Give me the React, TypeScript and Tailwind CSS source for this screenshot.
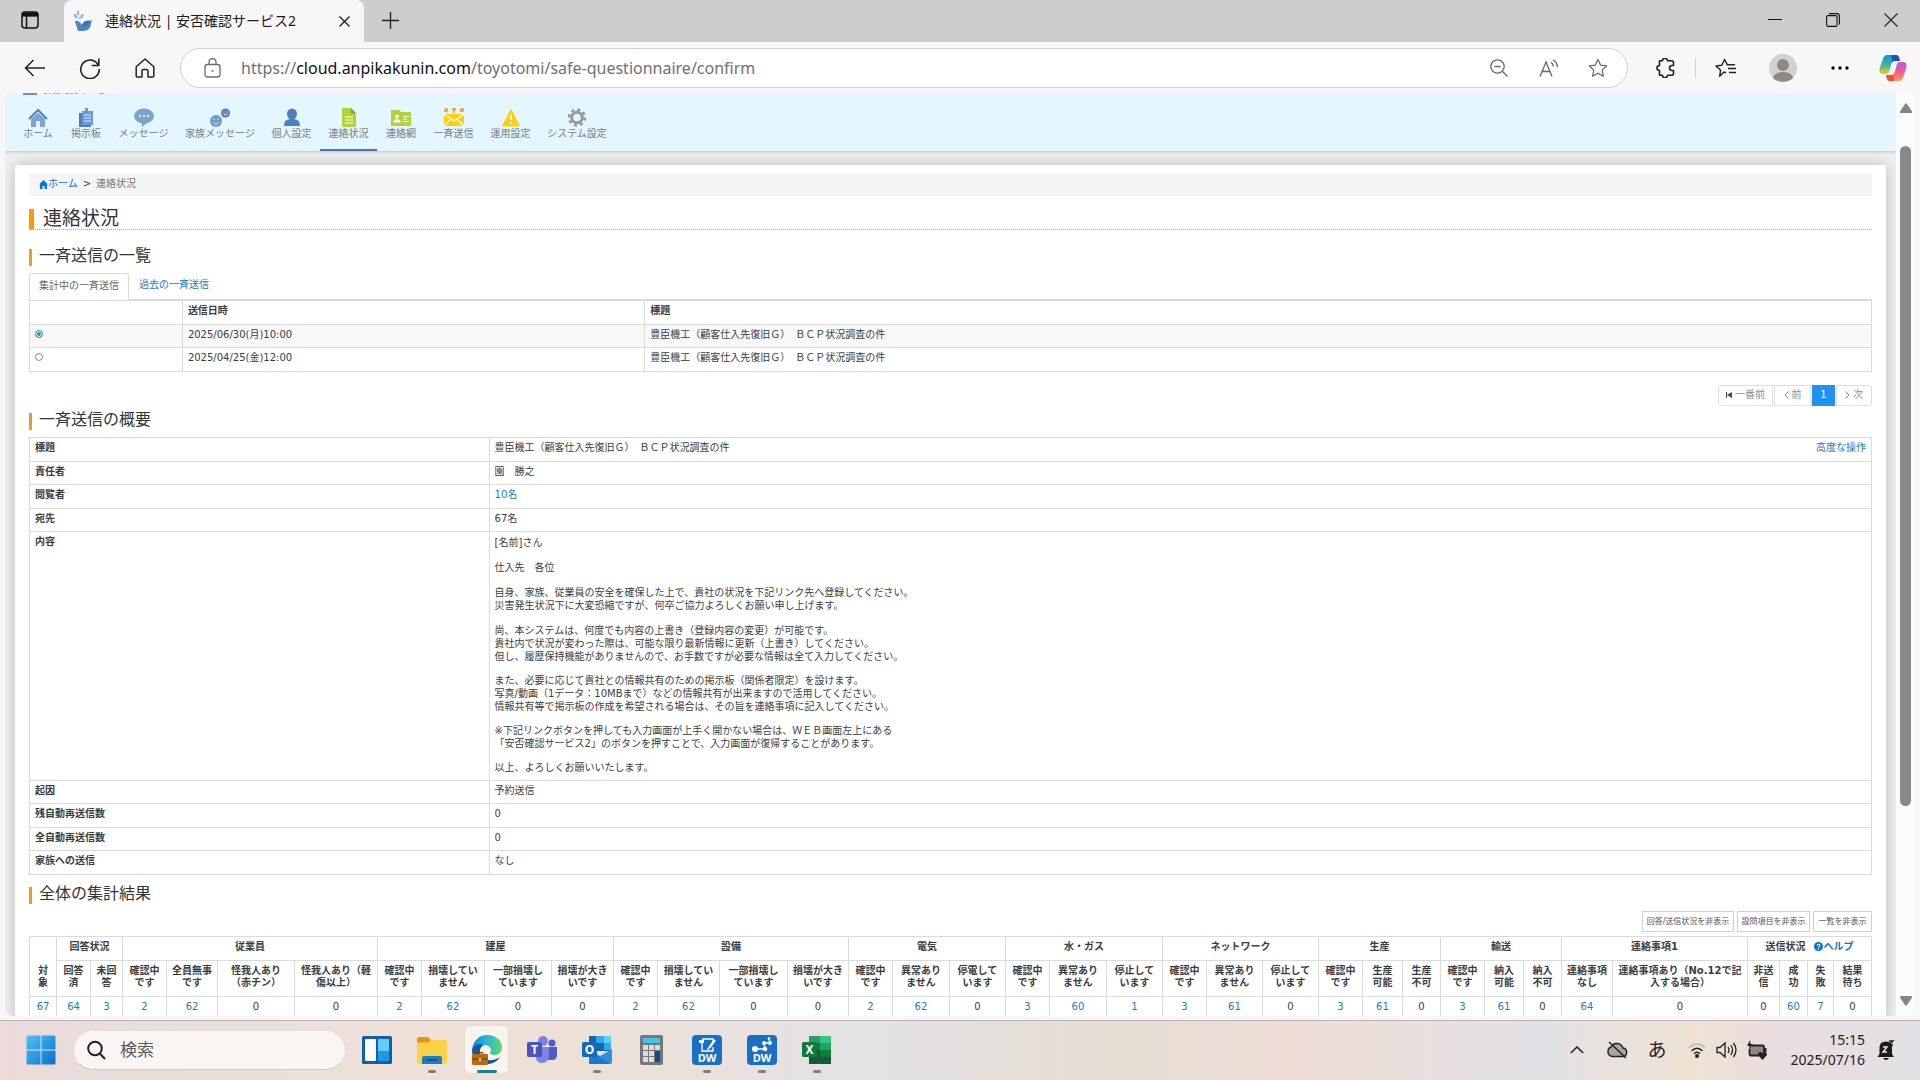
import type { ReactNode } from 'react';

const PAGE_FONT = "font-['DejaVu_Sans','Noto_Sans_CJK_JP',sans-serif]";
const UI_FONT = "font-['Noto_Sans','Noto_Sans_CJK_JP',sans-serif]";

/* ---------- Browser chrome ---------- */

function Slot({ label, className, children }: { label: string; className: string; children: ReactNode }) {
  return (
    <button type="button" aria-label={label} className={`flex h-10 shrink-0 items-center justify-center ${className}`}>
      {children}
    </button>
  );
}

function Bird() {
  return (
    <svg width="20" height="22" viewBox="0 0 20 22" aria-hidden="true">
      <path d="M2 11c3-1 5 1 7 4 1-4 4-5 7-4l3-1-1 3c0 5-3 8-8 8H6c-2-1-2-2-2-4-1-2-2-4-2-6z" fill="#4f84c4" />
      <path d="M17 11c-4-1-7 2-8 5 3 1 6-1 8-5z" fill="#3b6fb5" />
      <path d="M5 9C1 8 0 6 1 4c3 0 4 2 4 5zM5 6C3 4 3 2 5 0c2 2 2 4 0 6zM6 9c0-3 2-5 5-5 0 3-2 5-5 5z" fill="#9ebfe3" />
    </svg>
  );
}

function TabStrip() {
  return (
    <div className="flex h-[42px] shrink-0 bg-[#cdcdcd]">
      <Slot label="タブ操作メニュー" className="w-[60px]">
        <svg width="18" height="18" viewBox="0 0 18 18" fill="none" stroke="#111" strokeWidth="1.5">
          <rect x="1" y="1" width="16" height="16" rx="3" />
          <path d="M1 4.5h16M5.5 5v12" />
          <path d="M1.5 3.5h15" strokeWidth="4" />
        </svg>
      </Slot>
      <div className="ml-1 flex w-[300px] items-center rounded-t-lg bg-[#f7f7f7] pr-[10px] pl-[9px]">
        <Bird />
        <span className="ml-3 grow truncate text-sm leading-5 text-[#1b1b1b]">連絡状況 | 安否確認サービス2</span>
        <button type="button" aria-label="タブを閉じる" className="flex w-5 justify-center">
          <svg width="11" height="11" viewBox="0 0 11 11" stroke="#222" strokeWidth="1.4"><path d="M.5.5l10 10M10.5.5l-10 10" /></svg>
        </button>
      </div>
      <Slot label="新しいタブ" className="w-[53px]">
        <svg width="17" height="17" viewBox="0 0 17 17" stroke="#222" strokeWidth="1.4"><path d="M8.5 0v17M0 8.5h17" /></svg>
      </Slot>
      <div className="grow" />
      <Slot label="最小化" className="w-[58px]">
        <svg width="14" height="14" viewBox="0 0 14 14" stroke="#111" strokeWidth="1"><path d="M0 6.5h14" /></svg>
      </Slot>
      <Slot label="元に戻す" className="w-[58px]">
        <svg width="14" height="14" viewBox="0 0 14 14" fill="none" stroke="#111" strokeWidth="1.1">
          <rect x=".6" y="2.6" width="10.5" height="10.8" rx="1.5" />
          <path d="M3 .6h8a2.4 2.4 0 0 1 2.4 2.4v8.500" />
        </svg>
      </Slot>
      <Slot label="閉じる" className="w-[58px]">
        <svg width="14" height="14" viewBox="0 0 14 14" stroke="#222" strokeWidth="1.1"><path d="M.5.5l13 13M13.500.5l-13 13" /></svg>
      </Slot>
    </div>
  );
}

const STAR = 'M10 1.500l2.600 5.600 6.100.8-4.500 4.200 1.200 6.100L10 15.200l-5.400 3 1.200-6.100L1.300 7.900l6.100-.8z';

function Toolbar() {
  return (
    <div className="flex h-[51px] shrink-0 items-center bg-[#f7f7f7] pl-[7px] pr-[2px]">
      <Slot label="戻る" className="w-[55px]">
        <svg width="21" height="18" viewBox="0 0 21 18" fill="none" stroke="#222" strokeWidth="1.500"><path d="M9.500 1L1.500 9l8 8M1.500 9H21" /></svg>
      </Slot>
      <Slot label="更新" className="w-[55px]">
        <svg width="22" height="22" viewBox="0 0 22 22" fill="none" stroke="#222" strokeWidth="1.600">
          <path d="M19.500 8.500A9.300 9.300 0 1 0 20.300 12" />
          <path d="M19.800 1.500v7h-7" />
        </svg>
      </Slot>
      <Slot label="ホーム" className="w-[55px]">
        <svg width="20" height="20" viewBox="0 0 20 20" fill="none" stroke="#222" strokeWidth="1.500" strokeLinejoin="round">
          <path d="M10 1l8.800 7.800V18a1 1 0 0 1-1 1H13v-6a1.500 1.500 0 0 0-1.500-1.500h-3A1.500 1.500 0 0 0 7 13v6H2.200a1 1 0 0 1-1-1V8.800z" />
        </svg>
      </Slot>
      <div className="ml-2 flex h-10 grow items-center rounded-full border border-[#d0d0d0] bg-white">
        <svg className="ml-[23px] shrink-0" width="17" height="20" viewBox="0 0 17 20" fill="none" stroke="#6b6b6b" strokeWidth="1.300">
          <rect x="1" y="6.500" width="15" height="12.500" rx="2.500" />
          <path d="M5 6.500V4a3.500 3.500 0 0 1 7 0v2.500" />
          <circle cx="8.500" cy="13" r="1" fill="#6b6b6b" stroke="none" />
        </svg>
        <a href="#url" className="ml-5 grow text-base leading-6 text-[#6f6f6f]">
          https://<span className="text-[#111]">cloud.anpikakunin.com</span>/toyotomi/safe-questionnaire/confirm
        </a>
        <Slot label="縮小" className="w-[52px]">
          <svg width="18" height="18" viewBox="0 0 18 18" fill="none" stroke="#666" strokeWidth="1.300"><circle cx="7.500" cy="7.500" r="6.700" /><path d="M12.500 12.500l5 5M4.500 7.500h6" /></svg>
        </Slot>
        <Slot label="音声で読み上げる" className="w-[48px]">
          <svg width="20" height="18" viewBox="0 0 20 18" fill="none" stroke="#666" strokeWidth="1.300"><path d="M1 17.500L7 3l6 14.500M3.200 12.500h7.600M12 3.200c1.500 1 2.200 2.300 2.300 4.300M14 .8c3 1.700 4.300 4 4.400 7.400" /></svg>
        </Slot>
        <Slot label="お気に入りに追加" className="mr-1 w-[50px]">
          <svg width="20" height="20" viewBox="0 0 20 20" fill="none" stroke="#666" strokeWidth="1.200" strokeLinejoin="round"><path d={STAR} /></svg>
        </Slot>
      </div>
      <Slot label="拡張機能" className="ml-[7px] w-[60px]">
        <svg width="19" height="20" viewBox="0 0 19 20" fill="none" stroke="#222" strokeWidth="1.600" strokeLinejoin="round">
          <path d="M3.500 2.800h3a2.500 2.500 0 0 1 5 0h4a2 2 0 0 1 2 2v2.700h-1.500a2.500 2.500 0 0 0 0 5h1.500v2.700a2 2 0 0 1-2 2h-4a2.500 2.500 0 0 1-5 0h-3v-4.700a2.500 2.500 0 0 1 0-5z" />
        </svg>
      </Slot>
      <div className="h-5 w-px bg-[#cfcfcf]" />
      <Slot label="お気に入り" className="w-[58px]">
        <svg width="21" height="20" viewBox="0 0 21 20" fill="none" stroke="#222" strokeWidth="1.400" strokeLinejoin="round"><path d="M11 14.800L9 14l-4.300 4.200.9-6L1 8l5.800-.8L9.500 1.500l2.800 5.200H20M13 10.500h8M14 14.500h7" /></svg>
      </Slot>
      <Slot label="プロファイル" className="w-[58px]">
        <svg width="28" height="28" viewBox="0 0 28 28"><circle cx="14" cy="14" r="14" fill="#d3d1ce" /><circle cx="14" cy="11" r="6" fill="#8d8a86" /><path d="M4 24c1-4 5-6 10-6s9 2 10 6c-5 5-15 5-20 0z" fill="#8d8a86" /></svg>
      </Slot>
      <Slot label="設定など" className="w-[56px]">
        <svg width="18" height="4" viewBox="0 0 18 4"><circle cx="2" cy="2" r="1.700" /><circle cx="9" cy="2" r="1.700" /><circle cx="16" cy="2" r="1.700" /></svg>
      </Slot>
      <Slot label="Copilot" className="w-[50px]">
        <svg width="28" height="26" viewBox="0 0 28 26">
          <defs>
            <linearGradient id="cpA" x1="0" y1="0" x2="0" y2="1"><stop offset="0" stopColor="#1a8fe6" /><stop offset=".5" stopColor="#35b6a0" /><stop offset="1" stopColor="#f3c81f" /></linearGradient>
            <linearGradient id="cpB" x1="0" y1="0" x2="0" y2="1"><stop offset="0" stopColor="#b65ae8" /><stop offset=".6" stopColor="#f4608a" /><stop offset="1" stopColor="#ffa04d" /></linearGradient>
          </defs>
          <path d="M8 0h9c3 0 3 3 4 6h-5c-2 0-3 1-4 4l-2 7c-1 2-2 2-4 2H4c-4 0-4-3-3-7l3-8C5 1 6 0 8 0z" fill="url(#cpA)" />
          <path d="M12 0h5c3 0 3 3 4 6h-5c-1 0-2 0-2.500 1z" fill="#1a50c8" />
          <path d="M20 26h-9c-3 0-3-3-4-6h5c2 0 3-1 4-4l2-7c1-2 2-2 4-2h2c4 0 4 3 3 7l-3 8c-1 3-2 4-4 4z" fill="url(#cpB)" />
          <path d="M15 26h-4c-3 0-3-3-4-6h5c1 0 2 0 2.500-1z" fill="#f0502f" />
        </svg>
      </Slot>
    </div>
  );
}

/* ---------- Site navigation ---------- */

const navItems: { label: string; width: string; icon: ReactNode; active?: boolean }[] = [
  {
    label: 'ホーム', width: 'w-[48px]',
    icon: <><path d="M10 4.500l7 6.500v8h-5v-6H8v6H3v-8z" fill="#7ba3d6" /><path d="M1 11l9-9 9 9" fill="none" stroke="#4c80c0" strokeWidth="2" /></>,
  },
  {
    label: '掲示板', width: 'w-[48px]',
    icon: <><path d="M3 5h3v12h9v2H3z" fill="#4c80c0" /><path d="M6 3h3V0h3v3h5v14H6z" fill="#6c99d1" /><path d="M8 7h7M8 10h7M8 13h7" stroke="#dcebfa" /></>,
  },
  {
    label: 'メッセージ', width: 'w-[67px]',
    icon: <><ellipse cx="10" cy="8" rx="10" ry="7.500" fill="#7ba3d6" /><path d="M8 14h6l-6 5z" fill="#7ba3d6" /><path d="M5 8h2M9 8h2M13 8h2" stroke="#e6f2fc" strokeWidth="2" /></>,
  },
  {
    label: '家族メッセージ', width: 'w-[86px]',
    icon: <><circle cx="6" cy="13" r="6" fill="#6c99d1" /><circle cx="15.500" cy="5" r="4.500" fill="#4c80c0" /><path d="M3 14q3 4 6 0M13.500 6q2 2 4 0" fill="none" stroke="#e6f2fc" /><path d="M4 10.500v1.500M8 10.500v1.500M14 3.500v1M17 3.500v1" stroke="#e6f2fc" /></>,
  },
  {
    label: '個人設定', width: 'w-[57px]',
    icon: <><ellipse cx="10" cy="6" rx="5" ry="5.500" fill="#4c80c0" /><path d="M2 18c0-5 2-6 6-7h4c4 1 6 2 6 7z" fill="#4c80c0" /></>,
  },
  {
    label: '連絡状況', width: 'w-[57px]', active: true,
    icon: <><path d="M3 0h9l5 5.500V19H3z" fill="#b2d235" /><path d="M12 0l5 5.500h-5z" fill="#4fae72" /><path d="M6 9h8M6 12h8M6 15h8" stroke="#fff" /></>,
  },
  {
    label: '連絡網', width: 'w-[48px]',
    icon: <><path d="M0 2h8l2 2h10v14H0z" fill="#b2d235" /><circle cx="6" cy="8.500" r="2" fill="#fff" /><path d="M2.500 14c0-3 7-3 7 0zM12 8.500h6M12 11h4M12 13.500h6" fill="#fff" stroke="#fff" /></>,
  },
  {
    label: '一斉送信', width: 'w-[57px]',
    icon: <><path d="M0 6h20v12H0z" fill="#ffcf0d" /><path d="M0 6l10 7 10-7M0 18l7-7M20 18l-7-7" fill="none" stroke="#fff" strokeWidth="1.200" /><path d="M1 1h3M1 1v3M1 1l3 3M16 4l3-3M16 1h3v3M10 0v5M8 2l2-2 2 2" stroke="#f29b1d" strokeWidth="1.500" fill="none" /></>,
  },
  {
    label: '運用設定', width: 'w-[57px]',
    icon: <><path d="M10 1.500L18.500 18h-17z" fill="#ffcf0d" stroke="#ffcf0d" strokeLinejoin="round" /><path d="M10 7v5M10 14v2" stroke="#fff" strokeWidth="2" /></>,
  },
  {
    label: 'システム設定', width: 'w-[76px]',
    icon: <><circle cx="10" cy="9.500" r="5.300" fill="none" stroke="#999" strokeWidth="3" /><circle cx="10" cy="9.500" r="7.900" fill="none" stroke="#999" strokeWidth="2.600" strokeDasharray="3.100 3.100" /></>,
  },
];

function SiteNav() {
  return (
    <header className="relative z-10 flex h-[58px] shrink-0 flex-col rounded-tl-lg bg-[#e4f6ff] shadow-[0_1px_3px_rgba(0,0,0,0.2)]">
      <div className="flex h-[2px] items-end gap-[6px] overflow-hidden pl-[18px]">
        <span className="h-[2px] w-[14px] shrink-0 bg-[#6c8fc8]" />
        <span className="text-[9px] leading-[9px] text-[#6c8fc8]">安否確認サービス2</span>
      </div>
      <nav className="flex grow pl-[9px]">
        {navItems.map((item) => (
          <a
            key={item.label}
            href="#nav"
            className={`flex h-14 shrink-0 flex-col items-center border-b-2 pt-[13px] ${item.width} ${item.active ? 'border-[#4a76b8]' : 'border-transparent'}`}
          >
            <svg width="20" height="20" viewBox="0 0 20 20" className="shrink-0">{item.icon}</svg>
            <span className="text-[10px] leading-3 whitespace-nowrap text-[#777f85]">{item.label}</span>
          </a>
        ))}
      </nav>
    </header>
  );
}

/* ---------- Page sections ---------- */

const CELL = 'border border-[#d9dadb] px-[5px] pt-1 pb-1 text-left align-top leading-3';
const LINK = 'text-[#2079cc]';

function SectionTitle({ children, className }: { children: ReactNode; className: string }) {
  return <h2 className={`h-[17px] border-l-[3px] border-[#e5a01f] pl-[7px] text-base leading-[13px] text-[#333] ${className}`}>{children}</h2>;
}

const broadcasts = [
  { date: '2025/06/30(月)10:00', title: '豊臣機工（顧客仕入先復旧Ｇ）　ＢＣＰ状況調査の件' },
  { date: '2025/04/25(金)12:00', title: '豊臣機工（顧客仕入先復旧Ｇ）　ＢＣＰ状況調査の件' },
];

function BroadcastList() {
  return (
    <section>
      <SectionTitle className="mt-[19px]">一斉送信の一覧</SectionTitle>
      <div className="mt-[7px] flex h-[27px] border-b border-[#d9dadb]">
        <button type="button" className="h-[27px] rounded-t-[3px] border border-b-white border-[#d9dadb] bg-white px-[9px] pb-[2px] leading-3 text-[#666]">集計中の一斉送信</button>
        <button type="button" className={`px-[10px] pb-[2px] leading-3 ${LINK}`}>過去の一斉送信</button>
      </div>
      <table className="w-full table-fixed border-collapse">
        <colgroup><col className="w-[8.3%]" /><col className="w-[25.1%]" /><col /></colgroup>
        <thead>
          <tr className="h-6">
            <th className={CELL} aria-label="選択" />
            <th className={CELL}>送信日時</th>
            <th className={CELL}>標題</th>
          </tr>
        </thead>
        <tbody>
          {broadcasts.map((row, i) => (
            <tr key={row.date} className="h-6 odd:h-[23px] odd:bg-[#f8f8f8]">
              <td className={CELL}>
                <input
                  type="radio"
                  name="broadcast"
                  aria-label={row.date}
                  defaultChecked={i === 0}
                  className="mt-px block size-2 appearance-none rounded-full border border-[#8b8b8b] bg-white checked:border-[#3f9d96] checked:bg-[#2f8f88] checked:shadow-[inset_0_0_0_1px_white]"
                />
              </td>
              <td className={CELL}>{row.date}</td>
              <td className={CELL}>{row.title}</td>
            </tr>
          ))}
        </tbody>
      </table>
      <nav className="mt-[13px] flex h-[21px] justify-end gap-px text-[#8a8f94]" aria-label="ページ送り">
        <button type="button" className="flex w-[55px] items-center justify-center gap-[3px] rounded-l-[3px] border border-[#dedfe0] pb-[2px]">
          <svg width="6" height="6" viewBox="0 0 6 6" fill="#444"><path d="M0 0h1v6H0zM6 0v6L1 3z" /></svg>一番前
        </button>
        <button type="button" className="flex w-[37px] items-center justify-center gap-[3px] border border-[#dedfe0] pb-[2px]">
          <svg width="5" height="8" viewBox="0 0 5 8" fill="none" stroke="#888"><path d="M4.500.5L1 4l3.500 3.500" /></svg>前
        </button>
        <button type="button" className="w-[23px] bg-[#2090f3] pb-[2px] text-white">1</button>
        <button type="button" className="flex w-[36px] items-center justify-center gap-[3px] rounded-r-[3px] border border-[#dedfe0] pb-[2px]">
          <svg width="5" height="8" viewBox="0 0 5 8" fill="none" stroke="#888"><path d="M.5.5L4 4 .5 7.500" /></svg>次
        </button>
      </nav>
    </section>
  );
}

const message: { lines: string[]; gap: string }[] = [
  { lines: ['[名前]さん'], gap: 'mb-3' },
  { lines: ['仕入先　各位'], gap: 'mb-3' },
  {
    lines: [
      '自身、家族、従業員の安全を確保した上で、貴社の状況を下記リンク先へ登録してください。',
      '災害発生状況下に大変恐縮ですが、何卒ご協力よろしくお願い申し上げます。',
    ],
    gap: 'mb-3',
  },
  {
    lines: [
      '尚、本システムは、何度でも内容の上書き（登録内容の変更）が可能です。',
      '貴社内で状況が変わった際は、可能な限り最新情報に更新（上書き）してください。',
      '但し、履歴保持機能がありませんので、お手数ですが必要な情報は全て入力してください。',
    ],
    gap: 'mb-[11px]',
  },
  {
    lines: [
      'また、必要に応じて貴社との情報共有のための掲示板（関係者限定）を設けます。',
      '写真/動画（1データ：10MBまで）などの情報共有が出来ますので活用してください。',
      '情報共有等で掲示板の作成を希望される場合は、その旨を連絡事項に記入してください。',
    ],
    gap: 'mb-[11px]',
  },
  {
    lines: [
      '※下記リンクボタンを押しても入力画面が上手く開かない場合は、ＷＥＢ画面左上にある',
      '「安否確認サービス2」のボタンを押すことで、入力画面が復帰することがあります。',
    ],
    gap: 'mb-[11px]',
  },
  { lines: ['以上、よろしくお願いいたします。'], gap: 'mb-0' },
];

const summary: { label: string; height: string; value: ReactNode }[] = [
  {
    label: '標題', height: 'h-6',
    value: (
      <div className="flex justify-between">
        <span>豊臣機工（顧客仕入先復旧Ｇ）　ＢＣＰ状況調査の件</span>
        <a href="#advanced" className={LINK}>高度な操作</a>
      </div>
    ),
  },
  { label: '責任者', height: 'h-[23px]', value: '園　勝之' },
  { label: '閲覧者', height: 'h-6', value: <a href="#viewers" className={LINK}>10名</a> },
  { label: '宛先', height: 'h-[23px]', value: '67名' },
  {
    label: '内容', height: 'h-[249px]',
    value: message.map((para) => (
      <p key={para.lines[0]} className={`leading-[13px] ${para.gap}`}>
        {para.lines.map((line) => <span key={line} className="block">{line}</span>)}
      </p>
    )),
  },
  { label: '起因', height: 'h-[23px]', value: '予約送信' },
  { label: '残自動再送信数', height: 'h-6', value: '0' },
  { label: '全自動再送信数', height: 'h-[23px]', value: '0' },
  { label: '家族への送信', height: 'h-6', value: 'なし' },
];

function Summary() {
  return (
    <section>
      <SectionTitle className="mt-[7px]">一斉送信の概要</SectionTitle>
      <table className="mt-[7px] w-full table-fixed border-collapse">
        <colgroup><col className="w-[24.95%]" /><col /></colgroup>
        <tbody>
          {summary.map((row) => (
            <tr key={row.label} className={row.height}>
              <th scope="row" className={CELL}>{row.label}</th>
              <td className={CELL}>{row.value}</td>
            </tr>
          ))}
        </tbody>
      </table>
    </section>
  );
}

const groups: { name: string; cols: { label: string; value: number; width: number }[] }[] = [
  { name: '回答状況', cols: [{ label: '回答|済', value: 64, width: 34 }, { label: '未回|答', value: 3, width: 32 }] },
  {
    name: '従業員',
    cols: [
      { label: '確認中|です', value: 2, width: 44 },
      { label: '全員無事|です', value: 62, width: 51 },
      { label: '怪我人あり|（赤チン）', value: 0, width: 77 },
      { label: '怪我人あり（軽|傷以上）', value: 0, width: 83 },
    ],
  },
  {
    name: '建屋',
    cols: [
      { label: '確認中|です', value: 2, width: 44 },
      { label: '損壊してい|ません', value: 62, width: 63 },
      { label: '一部損壊し|ています', value: 0, width: 67 },
      { label: '損壊が大き|いです', value: 0, width: 62 },
    ],
  },
  {
    name: '設備',
    cols: [
      { label: '確認中|です', value: 2, width: 44 },
      { label: '損壊してい|ません', value: 62, width: 62 },
      { label: '一部損壊し|ています', value: 0, width: 68 },
      { label: '損壊が大き|いです', value: 0, width: 61 },
    ],
  },
  {
    name: '電気',
    cols: [
      { label: '確認中|です', value: 2, width: 44 },
      { label: '異常あり|ません', value: 62, width: 57 },
      { label: '停電して|います', value: 0, width: 56 },
    ],
  },
  {
    name: '水・ガス',
    cols: [
      { label: '確認中|です', value: 3, width: 44 },
      { label: '異常あり|ません', value: 60, width: 57 },
      { label: '停止して|います', value: 1, width: 56 },
    ],
  },
  {
    name: 'ネットワーク',
    cols: [
      { label: '確認中|です', value: 3, width: 44 },
      { label: '異常あり|ません', value: 61, width: 56 },
      { label: '停止して|います', value: 0, width: 56 },
    ],
  },
  {
    name: '生産',
    cols: [
      { label: '確認中|です', value: 3, width: 44 },
      { label: '生産|可能', value: 61, width: 40 },
      { label: '生産|不可', value: 0, width: 38 },
    ],
  },
  {
    name: '輸送',
    cols: [
      { label: '確認中|です', value: 3, width: 44 },
      { label: '納入|可能', value: 61, width: 39 },
      { label: '納入|不可', value: 0, width: 38 },
    ],
  },
  {
    name: '連絡事項1',
    cols: [
      { label: '連絡事項|なし', value: 64, width: 51 },
      { label: '連絡事項あり（No.12で記|入する場合）', value: 0, width: 135 },
    ],
  },
  {
    name: '送信状況',
    cols: [
      { label: '非送|信', value: 0, width: 32 },
      { label: '成|功', value: 60, width: 28 },
      { label: '失|敗', value: 7, width: 26 },
      { label: '結果|待ち', value: 0, width: 38 },
    ],
  },
];

const columns = groups.flatMap((g) => g.cols);
const TOTAL = 27 + columns.reduce((sum, c) => sum + c.width, 0);
const RCELL = 'border border-[#d9dadb] pt-1 text-center align-top leading-3 whitespace-nowrap';

function Results() {
  return (
    <section>
      <SectionTitle className="mt-3">全体の集計結果</SectionTitle>
      <div className="mt-[7px] flex h-[21px] justify-end gap-[3px] text-[8px] leading-[8px] whitespace-nowrap text-[#555]">
        <button type="button" className="w-[92px] border border-[#cfcfcf]">回答/送信状況を非表示</button>
        <button type="button" className="w-[73px] border border-[#cfcfcf]">設問項目を非表示</button>
        <button type="button" className="w-[59px] border border-[#cfcfcf]">一覧を非表示</button>
      </div>
      <table className="mt-1 w-full table-fixed border-collapse">
        <colgroup>
          <col style={{ width: `${(27 / TOTAL) * 100}%` }} />
          {columns.map((c, i) => <col key={i} style={{ width: `${(c.width / TOTAL) * 100}%` }} />)}
        </colgroup>
        <thead>
          <tr className="h-6">
            <th rowSpan={2} className="border border-[#d9dadb] pb-[7px] text-center align-bottom leading-3">対<br />象</th>
            {groups.map((g) => (
              <th key={g.name} colSpan={g.cols.length} className={RCELL}>
                {g.name}
                {g.name === '送信状況' && (
                  <a href="#help" className="ml-[9px] text-[#0275d8]">
                    <svg width="9" height="9" viewBox="0 0 10 10" className="inline-block align-[-1px]">
                      <circle cx="5" cy="5" r="5" fill="#0275d8" />
                      <path d="M3.500 4c0-2 3-2 3 0 0 1-1.500 1-1.500 2M5 7v1.200" fill="none" stroke="#fff" strokeWidth="1.200" />
                    </svg>
                    ヘルプ
                  </a>
                )}
              </th>
            ))}
          </tr>
          <tr className="h-9">
            {columns.map((c, i) => {
              const [top, bottom] = c.label.split('|');
              return <th key={i} className={RCELL}>{top}<br />{bottom}</th>;
            })}
          </tr>
        </thead>
        <tbody>
          <tr className="h-6">
            <td className={RCELL}><a href="#all" className={LINK}>67</a></td>
            {columns.map((c, i) => (
              <td key={i} className={RCELL}>{c.value ? <a href="#detail" className={LINK}>{c.value}</a> : 0}</td>
            ))}
          </tr>
        </tbody>
      </table>
    </section>
  );
}

function Scrollbar() {
  return (
    <div className="flex w-[19px] shrink-0 flex-col items-center rounded-r-lg bg-[#fcfcfc] py-[10px]" aria-hidden="true">
      <svg width="12" height="10" viewBox="0 0 12 10" fill="#858585" className="shrink-0"><path d="M5 1q1-1.500 2 0l5 7.500q.3 1.500-1 1.500H1q-1.300 0-1-1.500z" /></svg>
      <div className="mt-[33px] min-h-0 w-[11px] grow">
        <div className="h-[78%] w-full rounded-full bg-[#898989]" />
      </div>
      <svg width="12" height="10" viewBox="0 0 12 10" fill="#858585" className="mt-1 shrink-0"><path d="M5 9q1 1.500 2 0l5-7.500Q12.300 0 11 0H1Q-.3 0 0 1.500z" /></svg>
    </div>
  );
}

/* ---------- Taskbar ---------- */

const apps: { name: string; state?: 'open' | 'active'; icon: ReactNode }[] = [
  {
    name: 'ウィジェット',
    icon: <><rect x="0" y="1" width="30" height="28" rx="1.500" fill="#125fa8" /><rect x="3" y="4" width="11" height="22" rx="1" fill="#fbfbfb" /><rect x="16" y="4" width="11" height="12" fill="#62cdfb" /><rect x="16" y="16" width="11" height="10" fill="#1f97e6" /></>,
  },
  {
    name: 'エクスプローラー', state: 'open',
    icon: <><path d="M0 4q0-2 2-2h9l3 3h15v8H0z" fill="#d99a12" /><path d="M0 7.500h11L14 5h14q2 0 2 2v20q0 2-2 2H2q-2 0-2-2z" fill="#fdd04a" /><path d="M5 28v-5q0-2 2-2h16q2 0 2 2v6H5z" fill="#1c7cc4" /><path d="M10 25h10" stroke="#0f568f" strokeWidth="2" /></>,
  },
  {
    name: 'Microsoft Edge', state: 'active',
    icon: <>
      <defs>
        <linearGradient id="edgeA" x1="0" y1=".5" x2="1" y2=".5"><stop offset="0" stopColor="#1584d2" /><stop offset=".5" stopColor="#26b8d8" /><stop offset="1" stopColor="#5fdc62" /></linearGradient>
      </defs>
      <path d="M0 15C1 6 7 0 15 0c9 0 15 6 15 12 0 5-3 8-7 8-3 0-5-1-5-2s1-1 1-3c0-3-3-5-7-5-6 0-10 2-12 5z" fill="url(#edgeA)" />
      <path d="M0 15c1-4 7-7 12-5-4 2-5 6-3 10 3 6 11 7 19 2-4 6-9 7-13 7C6 29 0 23 0 15z" fill="#0f5a9f" />
      <rect x="0" y="19" width="16" height="11" rx="1" fill="#b86a14" /><path d="M0 24h16" stroke="#74400c" /><path d="M5 19v-1.500h6V19" stroke="#74400c" fill="none" /><rect x="7" y="23" width="2" height="3" fill="#ffd34d" />
    </>,
  },
  {
    name: 'Teams',
    icon: <><circle cx="16" cy="6" r="5" fill="#7b83eb" /><circle cx="25" cy="8" r="3.500" fill="#5059c9" /><path d="M21 12h9v8q0 5-5 5h-4z" fill="#5059c9" /><path d="M9 12h13v9q-1 7-7 7t-6-6z" fill="#7b83eb" /><rect x="0" y="7" width="15" height="15" rx="1.500" fill="#4b53bc" /><text x="7.500" y="19" textAnchor="middle" fontSize="12" fontWeight="700" fill="#fff">T</text></>,
  },
  {
    name: 'Outlook', state: 'open',
    icon: <><path d="M7 1h22v15H7z" fill="#1066b5" /><path d="M14 1h8v7h-8zM22 8h7v7h-7z" fill="#32a9e7" /><path d="M22 1h7v7h-7z" fill="#58d0f8" /><path d="M7 14l11 7 12-7v13q0 2-2 2H9q-2 0-2-2z" fill="#2b8fdc" /><path d="M7 29l21 0L9 17z" fill="#1f76c9" /><rect x="0" y="7" width="15" height="15" rx="1.500" fill="#0f6cbd" /><text x="7.500" y="19" textAnchor="middle" fontSize="12" fontWeight="700" fill="#fff">O</text></>,
  },
  {
    name: '電卓',
    icon: <><rect x="3" y="0" width="23" height="30" rx="2" fill="#75787b" /><rect x="6" y="3" width="17" height="5" fill="#3fc5ef" /><path d="M6 10h5v5H6zM12 10h5v5h-5zM18 10h5v5h-5zM6 16h5v5H6zM12 16h5v5h-5zM6 22h5v5H6zM12 22h5v5h-5z" fill="#dcdcdc" /><path d="M18 16h5v11h-5z" fill="#164a87" /></>,
  },
  {
    name: 'DocuWorks Desk', state: 'open',
    icon: <><rect width="30" height="30" rx="4" fill="#186fc4" /><path d="M10 4h11v3M10 7v9h11v-4" stroke="#fff" strokeWidth="1.300" fill="none" /><path d="M7 5h5v3H7z" fill="#fff" /><path d="M23 5l-6 8" stroke="#fff" strokeWidth="2.200" /><path d="M15 15.500l.5-3 2 1.500z" fill="#fff" /><text x="15" y="27" textAnchor="middle" fontSize="11" fontWeight="700" fill="#fff">DW</text></>,
  },
  {
    name: 'DocuWorks Link', state: 'open',
    icon: <><rect width="30" height="30" rx="4" fill="#186fc4" /><path d="M8 14h10l-1-6h6l-1-5" stroke="#fff" strokeWidth="1.300" fill="none" /><circle cx="8" cy="14" r="3" fill="#fff" /><circle cx="18" cy="14" r="2.300" fill="#fff" /><circle cx="17" cy="8" r="2" fill="#fff" /><circle cx="23" cy="8" r="2" fill="#fff" /><circle cx="22" cy="3.500" r="1.300" fill="#fff" /><text x="15" y="27" textAnchor="middle" fontSize="11" fontWeight="700" fill="#fff">DW</text></>,
  },
  {
    name: 'Excel', state: 'open',
    icon: <><path d="M7 1h22v28H7z" fill="#107c41" /><path d="M7 1h11v7H7z" fill="#21a366" /><path d="M18 1h11v7H18z" fill="#33c481" /><path d="M18 8h11v7H18z" fill="#21a366" /><path d="M7 15h11v14H7z" fill="#185c37" /><path d="M18 22h11v7H18z" fill="#185c37" /><rect x="0" y="7" width="15" height="15" rx="1.500" fill="#0f7a40" /><text x="7.500" y="19" textAnchor="middle" fontSize="12" fontWeight="700" fill="#fff">X</text></>,
  },
];

function Taskbar() {
  return (
    <footer className="flex h-[60px] shrink-0 items-center border-t border-[#b9b5b6] bg-[linear-gradient(90deg,#eddadb_0%,#e6e0dd_9%,#efe0d8_21%,#eee0d6_29%,#e4e2e5_45%,#e6ddd3_58%,#efded7_68%,#e3e1e6_80%,#efe2d4_88%,#eadde0_93%,#e2e1e5_100%)] pr-[25px] pb-[2px]">
      <Slot label="スタート" className="ml-[14px] w-[53px]">
        <svg width="30" height="30" viewBox="0 0 30 30">
          <defs><linearGradient id="win" x1="0" y1="0" x2="1" y2="1"><stop offset="0" stopColor="#4cc4f5" /><stop offset="1" stopColor="#0a6fcb" /></linearGradient></defs>
          <path d="M2 .5h12.500v14H.5V2Q.5.5 2 .5zM15.500.5H28q1.500 0 1.500 1.500v12.500h-14zM.5 15.500h14v14H2Q.5 29.500.5 28zM15.500 15.500h14V28q0 1.500-1.500 1.500H15.500z" fill="url(#win)" />
        </svg>
      </Slot>
      <div className="ml-[6px] flex h-10 w-[273px] items-center rounded-full border border-[#e6dedc] border-b-[#cfc8c6] bg-[#faf5f3] pl-[13px]">
        <svg width="19" height="20" viewBox="0 0 19 20" fill="none" stroke="#222" strokeWidth="2" className="shrink-0"><circle cx="8" cy="8.500" r="6.800" /><path d="M12.800 13.500L18 19" /></svg>
        <input type="search" aria-label="検索" placeholder="検索" className="ml-[14px] w-full min-w-0 bg-transparent text-[17px] leading-6 outline-none placeholder:text-[#5d5a59]" />
      </div>
      <div className="ml-[3px] flex">
        {apps.map((app) => (
          <button key={app.name} type="button" aria-label={app.name} className="flex w-[55px] justify-center">
            <span className={`flex h-[49px] w-[45px] flex-col items-center rounded-md pt-[9px] ${app.state === 'active' ? 'border border-[#e6dcd6] bg-[#faf3ee]' : 'border border-transparent'}`}>
              <svg width="30" height="30" viewBox="0 0 30 30" className="shrink-0">{app.icon}</svg>
              {app.state === 'open' && <span className="mt-[5px] h-1 w-2 rounded-full bg-[#857d7c]" />}
              {app.state === 'active' && <span className="mt-[5px] h-1 w-5 rounded-full bg-[#1c7f8c]" />}
            </span>
          </button>
        ))}
      </div>
      <div className="grow" />
      <Slot label="隠れているインジケーター" className="w-[40px]">
        <svg width="14" height="8" viewBox="0 0 14 8" fill="none" stroke="#222" strokeWidth="1.600"><path d="M.8 7L7 1l6.200 6" /></svg>
      </Slot>
      <Slot label="OneDrive" className="w-[40px]">
        <svg width="22" height="18" viewBox="0 0 22 18" fill="#aaa5a5" stroke="#222" strokeWidth="1.400"><path d="M6 15.500a5 5 0 0 1-1-9.500 6.500 6.500 0 0 1 12 1 4.300 4.300 0 0 1 0 8.500z" /><path d="M3 1l17 16" /></svg>
      </Slot>
      <span className="w-[40px] text-center text-[19px] leading-7 text-[#222]">あ</span>
      <div className="flex w-[94px] items-center gap-[10px] pl-[11px]">
        <svg width="18" height="16" viewBox="0 0 18 16" fill="none" stroke="#222" strokeWidth="1.400"><path d="M1 6q8-8 16 0" stroke="#b9b3b3" /><path d="M3.500 9q5.500-5.500 11 0M6 11.800q3-3 6 0" /><circle cx="9" cy="14" r="1.300" fill="#222" /></svg>
        <svg width="21" height="18" viewBox="0 0 21 18" fill="none" stroke="#222" strokeWidth="1.300"><path d="M1 6.500h3L9 2v14l-5-4.500H1zM12 6q2 3 0 6M14.800 4q3.500 5 0 10M17.500 2q5 7 0 14" /></svg>
        <svg width="21" height="20" viewBox="0 0 21 20"><path d="M5 5.500h10.500q1.500 0 1.500 1.500v8.500H4q-1.500 0-1.500-1.500V9" fill="#8d8888" stroke="#222" strokeWidth="1.800" /><path d="M18.500 8v4" stroke="#222" strokeWidth="2" /><path d="M3 0L0 6h2.500L2 10l4-6H3.500z" fill="#222" /><path d="M15.500 20L11 15q0-3 2.500-3 1.500 0 2 1.500.5-1.500 2-1.500 2.500 0 2.500 3z" fill="#222" /></svg>
      </div>
      <div className="w-[94px] text-right text-sm leading-5 text-[#222]">
        <div>15:15</div>
        <div>2025/07/16</div>
      </div>
      <svg width="18" height="20" viewBox="0 0 18 20" className="ml-3 shrink-0"><path d="M2.500 14V7.500Q2.500 1.500 9 1.500t6 6V14l2 3H.5zM6 18h6q-1 2-3 2t-3-2z" fill="#1b1b1b" /><path d="M6 7h4l-4 5h4" fill="none" stroke="#eee" strokeWidth="1.400" /><path d="M12 1h4l-4 4h4" fill="none" stroke="#1b1b1b" strokeWidth="1.400" /></svg>
    </footer>
  );
}

export default function App() {
  return (
    <div className={`flex h-screen w-full flex-col overflow-hidden bg-[#f7f7f7] ${UI_FONT}`}>
      <TabStrip />
      <Toolbar />
      <div className="mr-[5px] mb-1 ml-[5px] flex min-h-0 grow">
        <div className={`flex min-w-0 grow flex-col overflow-hidden rounded-l-lg bg-[#efefef] text-[10px] text-[#3a3d40] ${PAGE_FONT}`}>
          <SiteNav />
          <main className="mx-[10px] mt-[14px] shrink-0 rounded-t-[3px] bg-white px-[14px] pt-[9px] shadow-[0_0_14px_rgba(0,0,0,0.22)]">
            <nav className="flex h-[22px] items-center bg-[#f5f5f5] px-[10px] pb-[2px] leading-3" aria-label="パンくずリスト">
              <a href="#home" className="flex items-center text-[#0275d8]">
                <svg width="9" height="9" viewBox="0 0 9 9" fill="#0275d8"><path d="M4.500 0L9 4.500H8V9H5.500V6h-2v3H1V4.500H0z" /></svg>
                ホーム
              </a>
              <span className="mx-[5px]">&gt;</span>
              <span className="text-[#777]">連絡状況</span>
            </nav>
            <h1 className="mt-[13px] h-[21px] border-b border-l-[5px] border-dotted border-b-[#dba61c] border-l-[#ff9800] pl-[9px] text-[19px] leading-[18px] text-[#333] [border-left-style:solid]">連絡状況</h1>
            <BroadcastList />
            <Summary />
            <Results />
          </main>
        </div>
        <Scrollbar />
      </div>
      <Taskbar />
    </div>
  );
}
